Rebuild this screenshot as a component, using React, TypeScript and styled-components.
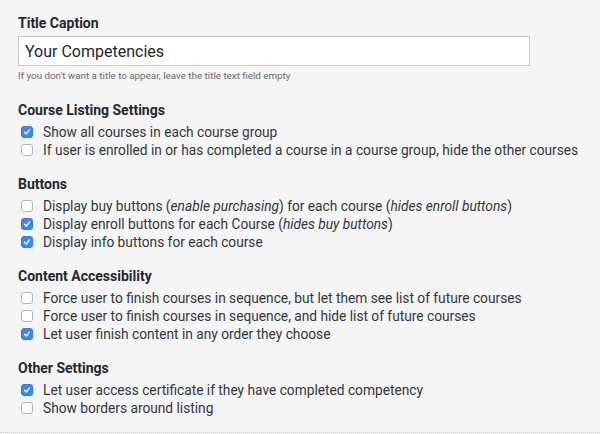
import React from "react";
import styled, { createGlobalStyle } from "styled-components";

const Global = createGlobalStyle`
  html, body { margin: 0; padding: 0; background: #f5f5f5; }
  body { font-family: Roboto, "Noto Sans", Arial, sans-serif; color: #23282d; }
`;

const Page = styled.div`
  width: 600px;
  height: 433px;
  box-sizing: border-box;
  padding: 15px 0 0 18px;
  border-bottom: 1px dotted #c8c8c8;
  overflow: hidden;
`;

const Heading = styled.div`
  font-size: 14px;
  font-weight: 700;
  line-height: 17px;
  color: #23282d;
  margin-bottom: 4px;
`;

const TextInput = styled.input`
  display: block;
  width: 512px;
  height: 30px;
  box-sizing: border-box;
  border: 1px solid #c8c8c8;
  background: #fff;
  padding: 0 6px;
  font-family: Roboto, Arial, sans-serif;
  font-size: 16px;
  color: #23282d;
  outline: none;
`;

const Help = styled.div`
  font-size: 9.8px;
  color: #6b6b6b;
  margin-top: 4px;
  line-height: 12px;
`;

const Section = styled.div<{ $top: number }>`
  margin-top: ${(p) => p.$top}px;
`;

const Row = styled.label`
  display: flex;
  align-items: center;
  height: 18px;
  font-size: 13.72px;
  color: #32373c;
`;

const Box = styled.span<{ $checked: boolean }>`
  width: 12px;
  height: 12px;
  box-sizing: border-box;
  margin: 0 10px 0 3px;
  border-radius: 3px;
  flex-shrink: 0;
  display: flex;
  align-items: center;
  justify-content: center;
  background: ${(p) => (p.$checked ? "#3b86f7" : "#fff")};
  border: 1px solid ${(p) => (p.$checked ? "#2f7cf0" : "#b4b4b4")};
`;

const Check = () => (
  <svg width="8" height="8" viewBox="0 0 8 8">
    <path d="M1.5 4.2 L3.3 6 L6.5 1.8" fill="none" stroke="#fff" strokeWidth="1.4" strokeLinecap="round" strokeLinejoin="round" />
  </svg>
);

const Item = ({ checked, children }: { checked?: boolean; children: React.ReactNode }) => (
  <Row>
    <Box $checked={!!checked}>{checked && <Check />}</Box>
    <span>{children}</span>
  </Row>
);

export default function App() {
  return (
    <>
      <Global />
      <Page>
        <Heading>Title Caption</Heading>
        <TextInput defaultValue="Your Competencies" />
        <Help>If you don't want a title to appear, leave the title text field empty</Help>

        <Section $top={20}>
          <Heading>Course Listing Settings</Heading>
          <Item checked>Show all courses in each course group</Item>
          <Item>If user is enrolled in or has completed a course in a course group, hide the other courses</Item>
        </Section>

        <Section $top={17}>
          <Heading>Buttons</Heading>
          <Item>
            Display buy buttons (<i>enable purchasing</i>) for each course (<i>hides enroll buttons</i>)
          </Item>
          <Item checked>
            Display enroll buttons for each Course (<i>hides buy buttons</i>)
          </Item>
          <Item checked>Display info buttons for each course</Item>
        </Section>

        <Section $top={17}>
          <Heading>Content Accessibility</Heading>
          <Item>Force user to finish courses in sequence, but let them see list of future courses</Item>
          <Item>Force user to finish courses in sequence, and hide list of future courses</Item>
          <Item checked>Let user finish content in any order they choose</Item>
        </Section>

        <Section $top={17}>
          <Heading>Other Settings</Heading>
          <Item checked>Let user access certificate if they have completed competency</Item>
          <Item>Show borders around listing</Item>
        </Section>
      </Page>
    </>
  );
}
